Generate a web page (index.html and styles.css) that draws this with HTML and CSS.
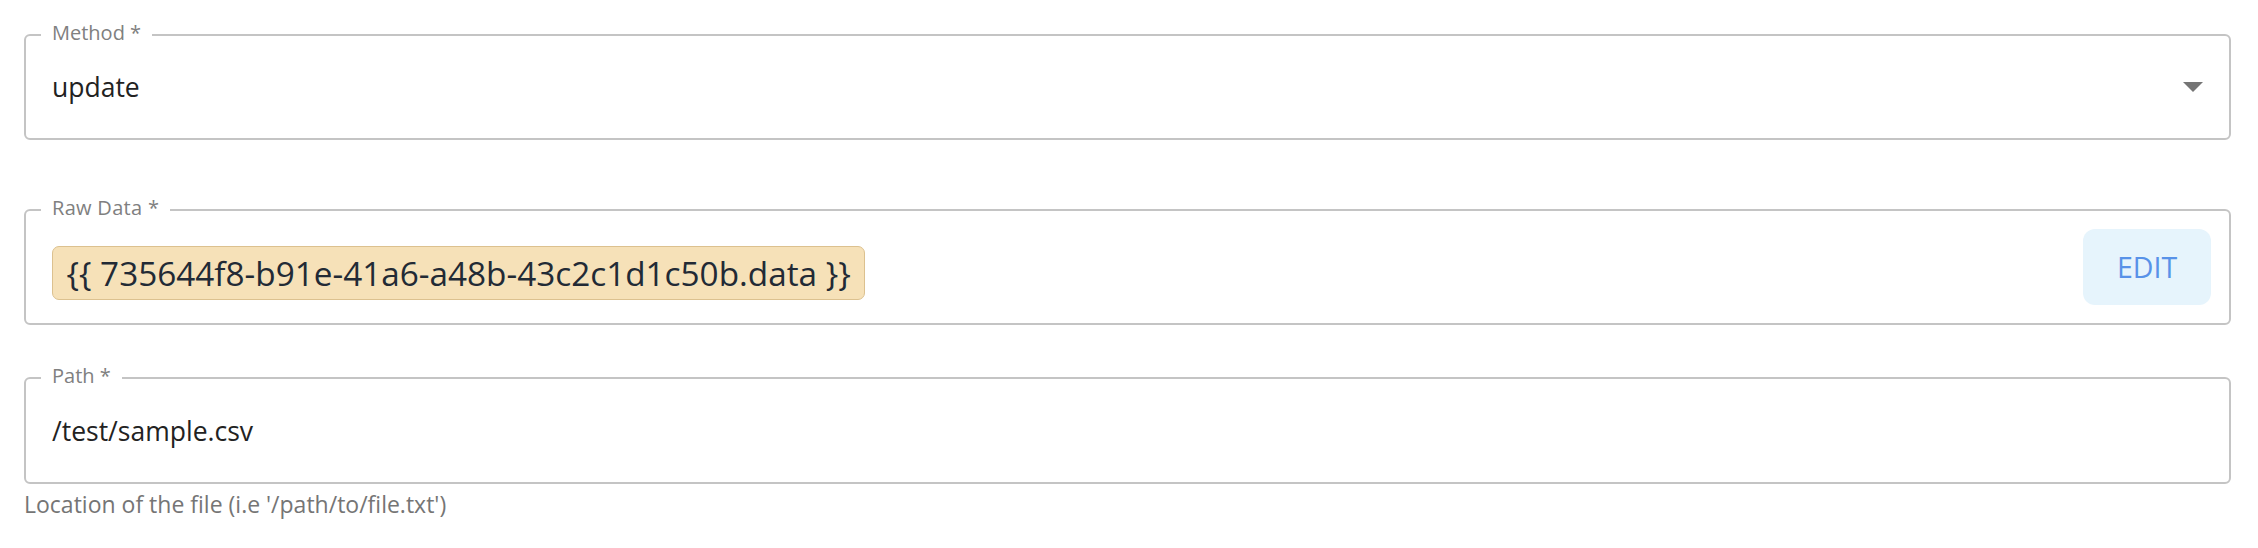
FILE: index.html
```html
<!DOCTYPE html>
<html lang="en">
<head>
<meta charset="utf-8">
<title>Form</title>
<link rel="stylesheet" href="styles.css">
</head>
<body>
<div class="form">
  <div class="field field-select">
    <span class="label">Method *</span>
    <span class="value">update</span>
    <span class="arrow"></span>
  </div>
  <div class="field field-raw">
    <span class="label">Raw Data *</span>
    <span class="chip">{{ 735644f8-b91e-41a6-a48b-43c2c1d1c50b.data }}</span>
    <button class="edit" type="button">EDIT</button>
  </div>
  <div class="group">
    <div class="field field-path">
      <span class="label">Path *</span>
      <span class="value">/test/sample.csv</span>
    </div>
    <div class="helper">Location of the file (i.e '/path/to/file.txt')</div>
  </div>
</div>
</body>
</html>
```
FILE: styles.css
```css
html, body {
  margin: 0;
  padding: 0;
  background: #ffffff;
}
body {
  font-family: "Open Sans", "Noto Sans", sans-serif;
  color: #222222;
}
.form {
  display: flex;
  flex-direction: column;
  padding: 34px 27px 0 24px;
}
.field {
  position: relative;
  display: flex;
  align-items: center;
  box-sizing: border-box;
  border: 2px solid #c4c4c4;
  border-radius: 6px;
  padding: 0 18px 0 26px;
}
.field-select {
  height: 106px;
  padding-right: 26px;
}
.field-raw {
  height: 116px;
  margin-top: 69px;
}
.field-path {
  height: 107px;
}
.group {
  margin-top: 52px;
  display: flex;
  flex-direction: column;
}
.label {
  position: absolute;
  left: 15px;
  top: -14px;
  padding: 0 11px;
  background: #ffffff;
  font-size: 20px;
  line-height: 22px;
  color: #808080;
}
.field-raw .label {
  letter-spacing: 0.3px;
}
.value {
  font-size: 26.5px;
  color: #222222;
}
.arrow {
  margin-left: auto;
  width: 0;
  height: 0;
  border-left: 10px solid transparent;
  border-right: 10px solid transparent;
  border-top: 10px solid #757575;
}
.chip {
  margin-top: 12px;
  box-sizing: border-box;
  height: 54px;
  display: flex;
  align-items: center;
  padding: 0 13.5px;
  background: #f6e1b8;
  border: 1.5px solid #dcc18f;
  border-radius: 7px;
  font-size: 33.3px;
  color: #222a35;
  white-space: nowrap;
}
.edit {
  margin-left: auto;
  width: 128px;
  height: 76px;
  border: none;
  border-radius: 12px;
  background: #e6f4fc;
  color: #5892e8;
  font-family: "Open Sans", sans-serif;
  font-size: 28.5px;
  font-weight: 500;
  padding: 0;
}
.helper {
  margin-top: 4px;
  font-size: 23px;
  color: #757575;
}
```
